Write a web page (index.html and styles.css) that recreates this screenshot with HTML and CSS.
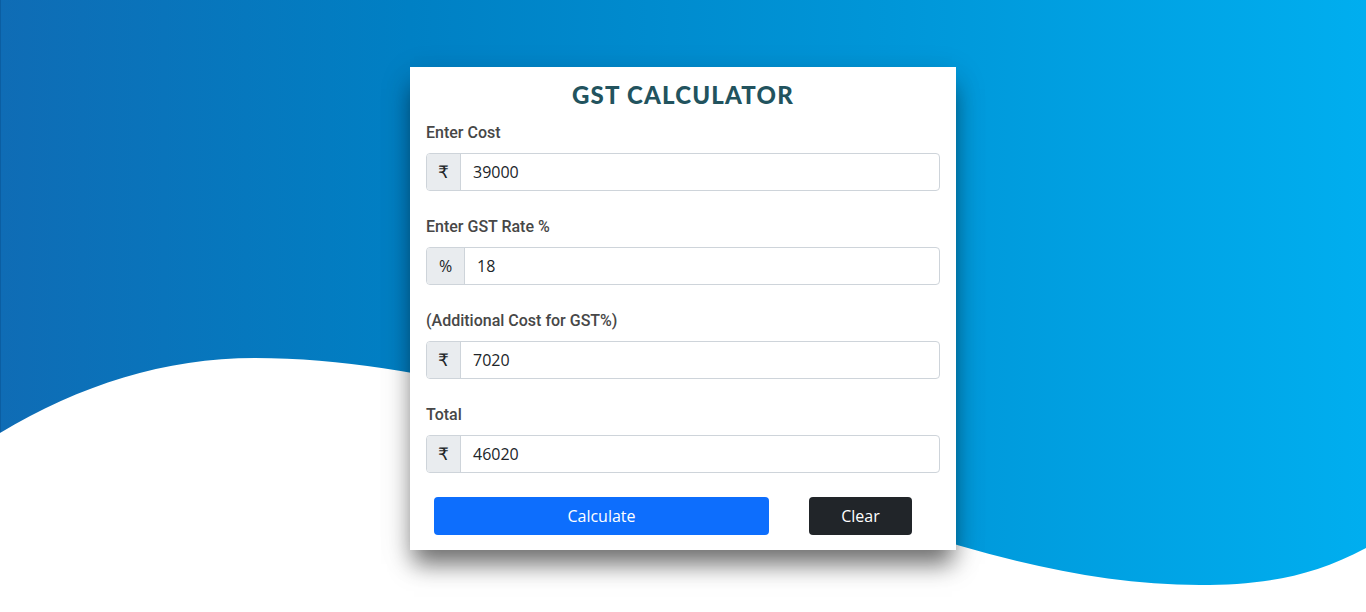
FILE: index.html
```html
<!DOCTYPE html>
<html>
<head>
<meta charset="utf-8">
<link rel="stylesheet" href="styles.css">
</head>
<body>
<svg class="wave" width="1366" height="612" viewBox="0 0 1366 612" preserveAspectRatio="none">
  <defs>
    <linearGradient id="g" x1="0" y1="0" x2="1" y2="0">
      <stop offset="0" stop-color="#0f6cb5"/>
      <stop offset="0.3" stop-color="#0080c4"/>
      <stop offset="0.65" stop-color="#0096d8"/>
      <stop offset="1" stop-color="#00aeef"/>
    </linearGradient>
  </defs>
  <path fill="url(#g)" d="M0 0 H1366 V548 C1310 578 1260 585 1200 585 C1100 585 1000 560 900 527 C700 460 480 358 255 358 C165 358 80 385 0 433 Z"/>
  <path stroke="#0b5ea2" stroke-width="1" d="M0.5 0 V432"/>
</svg>
<main class="page">
  <section class="card">
    <h1 class="title">GST CALCULATOR</h1>
    <div class="field">
      <label class="label">Enter Cost</label>
      <div class="group">
        <span class="addon">₹</span>
        <span class="input">39000</span>
      </div>
    </div>
    <div class="field">
      <label class="label">Enter GST Rate %</label>
      <div class="group">
        <span class="addon pct">%</span>
        <span class="input">18</span>
      </div>
    </div>
    <div class="field">
      <label class="label">(Additional Cost for GST%)</label>
      <div class="group">
        <span class="addon">₹</span>
        <span class="input">7020</span>
      </div>
    </div>
    <div class="field">
      <label class="label">Total</label>
      <div class="group">
        <span class="addon">₹</span>
        <span class="input">46020</span>
      </div>
    </div>
    <div class="actions">
      <button class="btn btn-primary">Calculate</button>
      <button class="btn btn-dark">Clear</button>
    </div>
  </section>
</main>
</body>
</html>
```
FILE: styles.css
```css
html, body {
  margin: 0;
  padding: 0;
  width: 1366px;
  height: 612px;
  overflow: hidden;
  background: #fff;
}
body {
  position: relative;
  font-family: "Open Sans", "Noto Sans", sans-serif;
}
.wave {
  position: absolute;
  left: 0;
  top: 0;
  z-index: 0;
}
.page {
  position: relative;
  z-index: 1;
  display: flex;
  justify-content: center;
  padding-top: 67px;
}
.card {
  width: 546px;
  box-sizing: border-box;
  background: #fff;
  padding: 0 16px 15px;
  box-shadow: 0 18px 22px -4px rgba(0,0,0,0.5), 0 8px 30px rgba(0,0,0,0.15);
}
.title {
  margin: 8px 0 6px;
  text-align: center;
  font-family: "Lato", sans-serif;
  font-weight: 900;
  font-size: 24px;
  line-height: 40px;
  letter-spacing: 1.2px;
  color: #22535e;
}
.field {
  margin-bottom: 24px;
}
.label {
  display: block;
  font-family: "Roboto", sans-serif;
  font-weight: 500;
  font-size: 16px;
  line-height: 24px;
  color: #474747;
  margin-bottom: 8px;
}
.group {
  display: flex;
  height: 38px;
  box-sizing: border-box;
  border: 1px solid #ced4da;
  border-radius: 4px;
  overflow: hidden;
}
.addon {
  width: 33px;
  background: #e9ecef;
  border-right: 1px solid #ced4da;
  display: flex;
  align-items: center;
  justify-content: center;
  font-size: 17px;
  color: #212529;
  font-family: "DejaVu Sans", sans-serif;
}
.addon.pct {
  width: 37px;
  font-family: "Open Sans", sans-serif;
  font-size: 16px;
}
.input {
  flex: 1;
  display: flex;
  align-items: center;
  padding-left: 12px;
  font-size: 16px;
  color: #212529;
}
.actions {
  display: flex;
  padding-left: 8px;
  gap: 40px;
}
.btn {
  height: 38px;
  border: 0;
  border-radius: 4px;
  color: #fff;
  font-family: "Open Sans", sans-serif;
  font-size: 16px;
  padding: 0;
}
.btn-primary {
  width: 335px;
  background: #0d6efd;
}
.btn-dark {
  width: 103px;
  background: #212529;
}
```
